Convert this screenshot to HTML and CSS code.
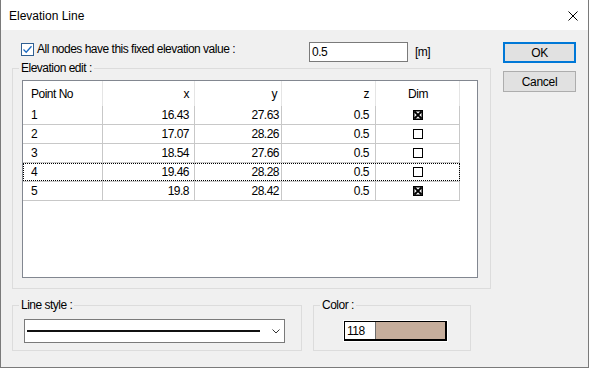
FILE: index.html
```html
<!DOCTYPE html>
<html>
<head>
<meta charset="utf-8">
<link rel="stylesheet" href="styles.css">
</head>
<body>
<div class="window">
  <div class="titlebar">
    <span class="title">Elevation Line</span>
    <svg class="close" width="10" height="10" viewBox="0 0 10 10"><path d="M0.5 0.5 L9.5 9.5 M9.5 0.5 L0.5 9.5" stroke="#000" stroke-width="1" fill="none"/></svg>
  </div>
  <div class="body">
    <div class="main">
      <div class="toprow">
        <label class="chk">
          <span class="box"><svg width="11" height="11" viewBox="0 0 11 11"><path d="M1.5 5.5 L4.2 8.2 L9.5 2.2" stroke="#1b6ac0" stroke-width="1.3" fill="none"/></svg></span>
          <span>All nodes have this fixed elevation value :</span>
        </label>
        <div class="input">0.5</div>
        <span class="unit">[m]</span>
      </div>
      <fieldset class="group elev">
        <legend>Elevation edit :</legend>
        <div class="listview">
          <div class="lv-head">
            <div class="c c1">Point No</div>
            <div class="c c2">x</div>
            <div class="c c3">y</div>
            <div class="c c4">z</div>
            <div class="c c5">Dim</div>
          </div>
          <div class="lv-row">
            <div class="c c1">1</div><div class="c c2">16.43</div><div class="c c3">27.63</div><div class="c c4">0.5</div>
            <div class="c c5"><span class="dim on"><svg width="10" height="10" viewBox="0 0 10 10"><rect x="0.75" y="0.75" width="8.5" height="8.5" fill="none" stroke="#000" stroke-width="1.5"/><path d="M1.5 1.5 L8.5 8.5 M8.5 1.5 L1.5 8.5" stroke="#000" stroke-width="1.8"/></svg></span></div>
          </div>
          <div class="lv-row">
            <div class="c c1">2</div><div class="c c2">17.07</div><div class="c c3">28.26</div><div class="c c4">0.5</div>
            <div class="c c5"><span class="dim"></span></div>
          </div>
          <div class="lv-row">
            <div class="c c1">3</div><div class="c c2">18.54</div><div class="c c3">27.66</div><div class="c c4">0.5</div>
            <div class="c c5"><span class="dim"></span></div>
          </div>
          <div class="lv-row focus">
            <div class="c c1">4</div><div class="c c2">19.46</div><div class="c c3">28.28</div><div class="c c4">0.5</div>
            <div class="c c5"><span class="dim"></span></div>
          </div>
          <div class="lv-row">
            <div class="c c1">5</div><div class="c c2">19.8</div><div class="c c3">28.42</div><div class="c c4">0.5</div>
            <div class="c c5"><span class="dim on"><svg width="10" height="10" viewBox="0 0 10 10"><rect x="0.75" y="0.75" width="8.5" height="8.5" fill="none" stroke="#000" stroke-width="1.5"/><path d="M1.5 1.5 L8.5 8.5 M8.5 1.5 L1.5 8.5" stroke="#000" stroke-width="1.8"/></svg></span></div>
          </div>
        </div>
      </fieldset>
      <div class="bottomrow">
        <fieldset class="group lstyle">
          <legend>Line style :</legend>
          <div class="combo">
            <span class="sample"></span>
            <svg class="chev" width="8" height="5" viewBox="0 0 8 5"><path d="M0.5 0.5 L4 4 L7.5 0.5" stroke="#333" stroke-width="1" fill="none"/></svg>
          </div>
        </fieldset>
        <fieldset class="group colorbox">
          <legend>Color :</legend>
          <div class="colorctl">
            <div class="colorinner">
              <span class="num">118</span>
              <span class="swatch"></span>
            </div>
          </div>
        </fieldset>
      </div>
    </div>
    <div class="buttons">
      <button class="btn default">OK</button>
      <button class="btn">Cancel</button>
    </div>
  </div>
</div>
</body>
</html>
```

FILE: styles.css
```css
html, body {
  margin: 0;
  padding: 0;
  background: #f0f0f0;
}
body {
  font-family: "Liberation Sans", Arial, sans-serif;
  font-size: 12px;
  letter-spacing: -0.5px;
  color: #000;
}
.window {
  width: 589px;
  height: 368px;
  box-sizing: border-box;
  border: 1px solid #7a7a7a;
  border-top: none;
  background: #f0f0f0;
  display: flex;
  flex-direction: column;
}
.titlebar {
  height: 30px;
  flex: none;
  box-sizing: border-box;
  background: #fff;
  display: flex;
  align-items: center;
  justify-content: space-between;
  padding: 1px 10px 0 8px;
  font-size: 12px;
  letter-spacing: 0;
}
.close { display: block; }
.body {
  display: flex;
  padding: 12px 0 0 11px;
}
.main {
  width: 479px;
  display: flex;
  flex-direction: column;
}
.toprow {
  display: flex;
  align-items: flex-start;
  height: 20px;
}
.chk {
  display: flex;
  align-items: center;
  gap: 3px;
  width: 288px;
  height: 13px;
  margin: 1px 0 0 9px;
  line-height: 13px;
}
.box {
  width: 13px;
  height: 13px;
  box-sizing: border-box;
  border: 1px solid #2f5f92;
  background: #fff;
  flex: none;
}
.box svg { display: block; }
.input {
  width: 99px;
  height: 20px;
  box-sizing: border-box;
  border: 1px solid #7a7a7a;
  background: #fff;
  padding-left: 2px;
  line-height: 18px;
}
.unit {
  margin-left: 7px;
  line-height: 20px;
}
fieldset.group {
  margin: 0;
  padding: 0;
  border: 1px solid #dcdcdc;
  min-width: 0;
}
legend {
  padding: 0 2px;
  margin-left: 6px;
  height: 12px;
  line-height: 13px;
}
.listview {
  margin: 6px 12px 10px 9px;
  height: 198px;
  box-sizing: border-box;
  border: 1px solid #828790;
  background: #fff;
}
.lv-head {
  display: flex;
  height: 25px;
  line-height: 26px;
}
.lv-head .c {
  border-right: 1px solid #e5e5e5;
}
.lv-row {
  display: flex;
  width: 437px;
  height: 19px;
  box-sizing: border-box;
  border-bottom: 1px solid #c8c8c8;
  line-height: 19px;
  position: relative;
}
.lv-row .c {
  border-right: 1px solid #c8c8c8;
}
.c {
  box-sizing: border-box;
  height: 100%;
  white-space: nowrap;
  overflow: hidden;
}
.c1 { width: 80px; padding-left: 8px; }
.c2 { width: 92px; text-align: right; padding-right: 5px; }
.c3 { width: 87px; text-align: right; padding-right: 2px; }
.c4 { width: 94px; text-align: right; padding-right: 6px; }
.c5 {
  width: 84px;
  display: flex;
  align-items: center;
  justify-content: center;
}
.lv-head .c3 { padding-right: 4px; }
.lv-head .c5 { padding-left: 1px; }
.dim {
  width: 10px;
  height: 10px;
  box-sizing: border-box;
  border: 1px solid #000;
  display: block;
}
.dim.on { border: none; }
.dim svg { display: block; }
.lv-row.focus::after {
  content: "";
  position: absolute;
  left: 0;
  right: 0;
  top: 0;
  bottom: 0;
  border: 1px dotted #000;
  pointer-events: none;
}
.bottomrow {
  display: flex;
  gap: 11px;
  margin-top: 10px;
}
.lstyle { width: 290px; box-sizing: border-box; }
.colorbox { width: 158px; box-sizing: border-box; }
.combo {
  margin: 8px 0 7px 11px;
  width: 261px;
  height: 24px;
  box-sizing: border-box;
  border: 1px solid #7a7a7a;
  background: #fff;
  display: flex;
  align-items: center;
  padding: 0 4px 0 2px;
}
.sample {
  width: 233px;
  height: 2px;
  background: #111;
  display: block;
}
.chev { margin-left: auto; display: block; }
.colorctl {
  margin: 9px 0 8px 29px;
  width: 105px;
  height: 22px;
  box-sizing: border-box;
  border: 1px solid #fff;
}
.colorinner {
  height: 100%;
  box-sizing: border-box;
  border-style: solid;
  border-color: #000;
  border-width: 1px 2px 2px 1px;
  display: flex;
}
.num {
  width: 31px;
  background: #fff;
  border-right: 1px solid #6d6d6d;
  padding-left: 2px;
  line-height: 18px;
  box-sizing: border-box;
}
.swatch {
  flex: 1;
  background: #c6ae9c;
}
.buttons {
  margin-left: 12px;
  display: flex;
  flex-direction: column;
  gap: 8px;
}
.btn {
  width: 73px;
  height: 21px;
  box-sizing: border-box;
  background: #e1e1e1;
  border: 1px solid #adadad;
  font-family: "Liberation Sans", Arial, sans-serif;
  font-size: 12px;
  letter-spacing: -0.3px;
  color: #000;
  padding: 0;
  margin: 0;
}
.btn.default {
  border: 2px solid #0078d7;
}
```
